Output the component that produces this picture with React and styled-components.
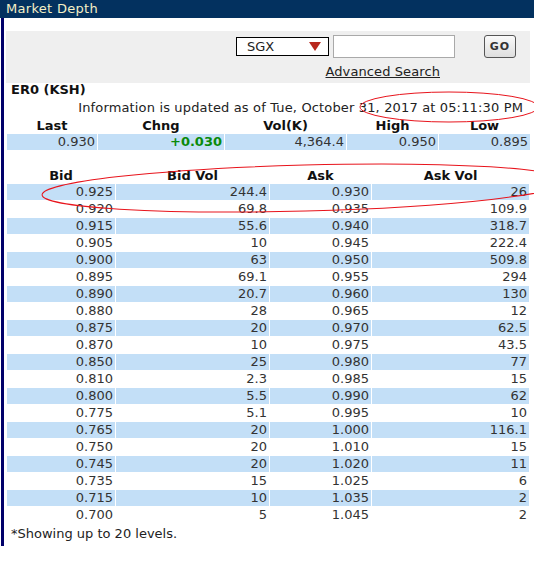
import React from 'react';
import styled, { createGlobalStyle } from 'styled-components';

const GlobalStyle = createGlobalStyle`
  html, body {
    margin: 0;
    padding: 0;
    background: #ffffff;
  }
  body {
    font-family: "DejaVu Sans", Verdana, sans-serif;
    font-size: 13px;
    color: #333;
  }
`;

const Page = styled.div`
  width: 534px;
  height: 564px;
  position: relative;
  overflow: hidden;
  background: #fff;
`;

const TitleBar = styled.div`
  height: 18px;
  background: #03315f;
  color: #f4efc6;
  font-size: 13px;
  line-height: 18px;
  padding-left: 6px;
  letter-spacing: 0.3px;
`;

const Body = styled.div`
  margin-left: 1px;
  width: 524px;
  border-left: 3px solid #00006a;
  padding: 13px 0 4px 2px;
`;

const SearchArea = styled.div`
  background: #efefef;
  height: 52px;
  box-sizing: border-box;
  padding: 4px 14px 0 0;
  display: flex;
  flex-direction: column;
  align-items: flex-end;
`;

const SearchRow = styled.div`
  display: flex;
  align-items: center;
`;

const Select = styled.div`
  width: 93px;
  height: 19px;
  box-sizing: border-box;
  border: 1px solid #000;
  background: #fff;
  display: flex;
  align-items: center;
  justify-content: space-between;
  padding: 0 7px 0 10px;
  font-size: 13px;
  color: #222;
`;

const Arrow = styled.span`
  width: 0;
  height: 0;
  border-left: 6px solid transparent;
  border-right: 6px solid transparent;
  border-top: 9px solid #b8281e;
`;

const TextInput = styled.div`
  width: 122px;
  height: 23px;
  box-sizing: border-box;
  border: 1px solid #a9a9a9;
  background: #fff;
  margin-left: 4px;
`;

const GoButton = styled.div`
  width: 32px;
  height: 23px;
  box-sizing: border-box;
  margin-left: 29px;
  border: 1px solid #555;
  border-radius: 3px;
  background: linear-gradient(#fafafa, #dedede);
  display: flex;
  align-items: center;
  justify-content: center;
  font-size: 11px;
  font-weight: bold;
  letter-spacing: 1px;
  color: #333;
`;

const AdvancedLink = styled.a`
  margin: 6px 76px 0 0;
  color: #222;
  text-decoration: underline;
  font-size: 13px;
  letter-spacing: 0.1px;
`;

const Symbol = styled.div`
  font-weight: bold;
  color: #111;
  padding: 0 0 0 5px;
  height: 16px;
  line-height: 14px;
`;

const InfoLine = styled.div`
  text-align: right;
  padding-right: 7px;
  height: 17px;
  line-height: 17px;
  color: #222;
  letter-spacing: 0.15px;
`;

const Grid = styled.div`
  display: grid;
  grid-template-columns: ${p => p.$cols};
  column-gap: 1px;
  row-gap: 1px;
  padding-left: 1px;
  margin-top: ${p => p.$top || 0}px;
`;

const HeadCell = styled.div`
  height: 16px;
  line-height: 18px;
  text-align: center;
  font-weight: bold;
  color: #111;
`;

const Cell = styled.div`
  height: 16px;
  line-height: 16px;
  text-align: right;
  padding-right: 2px;
  background: ${p => (p.$shade ? '#c3dff7' : 'transparent')};
  color: ${p => (p.$up ? '#0a8a0a' : '#333')};
  font-weight: ${p => (p.$up ? 'bold' : 'normal')};
`;

const Footnote = styled.div`
  padding-left: 5px;
  margin-top: 3px;
  height: 16px;
  line-height: 16px;
  color: #222;
`;

const Marks = styled.svg`
  position: absolute;
  left: 0;
  top: 0;
  pointer-events: none;
`;

const summaryHeads = ['Last', 'Chng', 'Vol(K)', 'High', 'Low'];
const summary = ['0.930', '+0.030', '4,364.4', '0.950', '0.895'];

const depthHeads = ['Bid', 'Bid Vol', 'Ask', 'Ask Vol'];
const depth = [
  ['0.925', '244.4', '0.930', '26'],
  ['0.920', '69.8', '0.935', '109.9'],
  ['0.915', '55.6', '0.940', '318.7'],
  ['0.905', '10', '0.945', '222.4'],
  ['0.900', '63', '0.950', '509.8'],
  ['0.895', '69.1', '0.955', '294'],
  ['0.890', '20.7', '0.960', '130'],
  ['0.880', '28', '0.965', '12'],
  ['0.875', '20', '0.970', '62.5'],
  ['0.870', '10', '0.975', '43.5'],
  ['0.850', '25', '0.980', '77'],
  ['0.810', '2.3', '0.985', '15'],
  ['0.800', '5.5', '0.990', '62'],
  ['0.775', '5.1', '0.995', '10'],
  ['0.765', '20', '1.000', '116.1'],
  ['0.750', '20', '1.010', '15'],
  ['0.745', '20', '1.020', '11'],
  ['0.735', '15', '1.025', '6'],
  ['0.715', '10', '1.035', '2'],
  ['0.700', '5', '1.045', '2'],
];

const App = () => {
  return (
    <Page>
      <GlobalStyle />
      <TitleBar>Market Depth</TitleBar>
      <Body>
        <SearchArea>
          <SearchRow>
            <Select>
              SGX
              <Arrow />
            </Select>
            <TextInput />
            <GoButton>GO</GoButton>
          </SearchRow>
          <AdvancedLink>Advanced Search</AdvancedLink>
        </SearchArea>
        <Symbol>ER0 (KSH)</Symbol>
        <InfoLine>Information is updated as of Tue, October 31, 2017 at 05:11:30 PM</InfoLine>

        <Grid $cols="90px 126px 121px 91px 91px" $top={1}>
          {summaryHeads.map(h => (
            <HeadCell key={h}>{h}</HeadCell>
          ))}
          {summary.map((v, i) => (
            <Cell key={i} $shade $up={i === 1}>{v}</Cell>
          ))}
        </Grid>

        <Grid $cols="108px 153px 101px 157px" $top={17}>
          {depthHeads.map(h => (
            <HeadCell key={h}>{h}</HeadCell>
          ))}
          {depth.map((row, r) =>
            row.map((v, c) => (
              <Cell key={r + '-' + c} $shade={r % 2 === 0}>{v}</Cell>
            ))
          )}
        </Grid>
        <Footnote>*Showing up to 20 levels.</Footnote>
      </Body>

      <Marks width="534" height="564">
        <ellipse cx="449" cy="107" rx="89" ry="15" fill="none" stroke="#e8141c" strokeWidth="1" />
        <ellipse cx="305" cy="188" rx="263" ry="23" fill="none" stroke="#e8141c" strokeWidth="1" transform="rotate(-1.5 305 188)" />
      </Marks>
    </Page>
  );
};

export default App;
